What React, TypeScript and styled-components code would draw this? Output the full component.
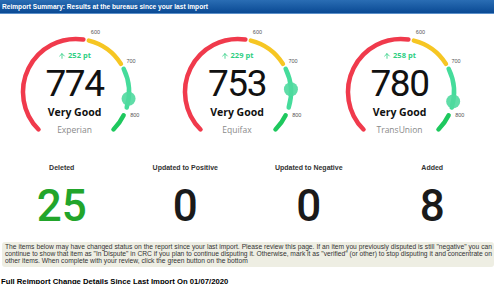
import React from "react";
import styled, { createGlobalStyle } from "styled-components";
import { ArrowUp } from "lucide-react";

const GlobalStyle = createGlobalStyle`
  html, body {
    margin: 0;
    padding: 0;
    background: #fff;
  }
  body {
    width: 500px;
    height: 284px;
    overflow: hidden;
    font-family: "Liberation Sans", Arial, sans-serif;
  }
`;

const Page = styled.div`
  width: 494px;
`;

const Header = styled.div`
  height: 13px;
  padding-left: 2px;
  background: linear-gradient(#2a6db4, #0a4a94);
  border-bottom: 1px solid #5b8fc9;
  color: #fff;
  font-weight: bold;
  font-size: 6.6px;
  line-height: 13px;
  white-space: nowrap;
`;

const GaugeRow = styled.div`
  display: grid;
  grid-template-columns: 165px 160px 165px;
  padding-top: 6px;
`;

const GaugeBox = styled.div`
  position: relative;
  width: 130px;
  height: 120px;
  margin: 0 auto;

  svg.dial {
    position: absolute;
    left: 0;
    top: 0;
  }
`;

const Readout = styled.div<{ $cx: number }>`
  position: relative;
  width: ${(p) => p.$cx * 2 - 2}px;
  display: flex;
  flex-direction: column;
  align-items: center;
  padding-top: 31px;
  font-family: "Open Sans", "Liberation Sans", sans-serif;
`;

const Delta = styled.div`
  display: flex;
  align-items: center;
  gap: 2px;
  color: #2fcf83;
  font-weight: bold;
  font-size: 7.5px;
  line-height: 9px;
`;

const Score = styled.div`
  margin-top: 4px;
  color: #111;
  font-family: Roboto, "Liberation Sans", sans-serif;
  font-size: 37px;
  line-height: 40px;
  letter-spacing: -1.5px;
`;

const Rating = styled.div`
  margin-top: 1px;
  color: #111;
  font-weight: bold;
  font-size: 10.5px;
  line-height: 14px;
`;

const Bureau = styled.div`
  margin-top: 5px;
  color: #8a8a8a;
  font-size: 8.5px;
  line-height: 11px;
`;

const StatRow = styled.div`
  display: grid;
  grid-template-columns: repeat(4, 1fr);
  margin-top: 23px;
`;

const Stat = styled.div`
  display: flex;
  flex-direction: column;
  align-items: center;
`;

const StatLabel = styled.div`
  color: #333;
  font-weight: bold;
  font-size: 7px;
  line-height: 10px;
`;

const StatValue = styled.div<{ $color?: string }>`
  margin-top: 13px;
  color: ${(p) => p.$color || "#1a1a1a"};
  font-family: Roboto, "Liberation Sans", sans-serif;
  font-weight: 500;
  font-size: 44px;
  line-height: 40px;
`;

const Notice = styled.div`
  margin: 16px 0 0 2px;
  padding: 2px 2px 2px 3px;
  background: #eeeee3;
  border-radius: 3px;
  color: #333;
  font-size: 6.7px;
  line-height: 6.9px;
  text-align: justify;
`;

const SectionTitle = styled.div`
  margin: 10px 0 0 1px;
  color: #000;
  font-weight: bold;
  font-size: 7.7px;
  white-space: nowrap;
`;

const CX = 58;
const CY = 72;
const R = 53;

const polar = (deg: number, r: number) => {
  const a = (deg * Math.PI) / 180;
  return { x: CX + r * Math.sin(a), y: CY - r * Math.cos(a) };
};

const arc = (from: number, to: number) => {
  const s = polar(from, R);
  const e = polar(to, R);
  const large = to - from > 180 ? 1 : 0;
  return `M ${s.x} ${s.y} A ${R} ${R} 0 ${large} 1 ${e.x} ${e.y}`;
};

const segments = [
  { from: -135, to: 8, color: "#f03a4c" },
  { from: 14, to: 58, color: "#f6c623" },
  { from: 64, to: 107, color: "#45dc9b" },
  { from: 116, to: 135, color: "#1ec85e" },
];

const ticks = [
  { label: "600", deg: 18 },
  { label: "700", deg: 61 },
  { label: "800", deg: 111 },
];

const scoreAngle = (score: number) => 12 + (score - 600) * 0.49;

const Gauge = ({ score, delta, rating, bureau }: { score: number; delta: number; rating: string; bureau: string }) => {
  const knob = polar(scoreAngle(score), R);
  return (
    <GaugeBox>
      <svg className="dial" width="130" height="120" viewBox="0 0 130 120">
        {segments.map((s) => (
          <path key={s.color} d={arc(s.from, s.to)} fill="none" stroke={s.color} strokeWidth="4.5" strokeLinecap="round" />
        ))}
        {ticks.map((t) => {
          const p = polar(t.deg, 63);
          return (
            <text key={t.label} x={p.x} y={p.y + 2} textAnchor="middle" fontSize="5.5" fill="#555" fontFamily="Liberation Sans, sans-serif">
              {t.label}
            </text>
          );
        })}
        <circle cx={knob.x} cy={knob.y} r="7" fill="#4fd99e" opacity="0.9" />
      </svg>
      <Readout $cx={CX}>
        <Delta>
          <ArrowUp size={8} strokeWidth={2.5} />
          {delta} pt
        </Delta>
        <Score>{score}</Score>
        <Rating>{rating}</Rating>
        <Bureau>{bureau}</Bureau>
      </Readout>
    </GaugeBox>
  );
};

const gauges = [
  { score: 774, delta: 252, rating: "Very Good", bureau: "Experian" },
  { score: 753, delta: 229, rating: "Very Good", bureau: "Equifax" },
  { score: 780, delta: 258, rating: "Very Good", bureau: "TransUnion" },
];

const stats = [
  { label: "Deleted", value: 25, color: "#22a52b" },
  { label: "Updated to Positive", value: 0 },
  { label: "Updated to Negative", value: 0 },
  { label: "Added", value: 8 },
];

export default function App() {
  return (
    <Page>
      <GlobalStyle />
      <Header>Reimport Summary: Results at the bureaus since your last import</Header>
      <GaugeRow>
        {gauges.map((g) => (
          <Gauge key={g.bureau} {...g} />
        ))}
      </GaugeRow>
      <StatRow>
        {stats.map((s) => (
          <Stat key={s.label}>
            <StatLabel>{s.label}</StatLabel>
            <StatValue $color={s.color}>{s.value}</StatValue>
          </Stat>
        ))}
      </StatRow>
      <Notice>
        The items below may have changed status on the report since your last import. Please review this page. If an item you
        previously disputed is still "negative" you can continue to show that item as "In Dispute" in CRC if you plan to continue
        disputing it. Otherwise, mark it as "verified" (or other) to stop disputing it and concentrate on other items. When complete
        with your review, click the green button on the bottom
      </Notice>
      <SectionTitle>Full Reimport Change Details Since Last Import On 01/07/2020</SectionTitle>
    </Page>
  );
}
